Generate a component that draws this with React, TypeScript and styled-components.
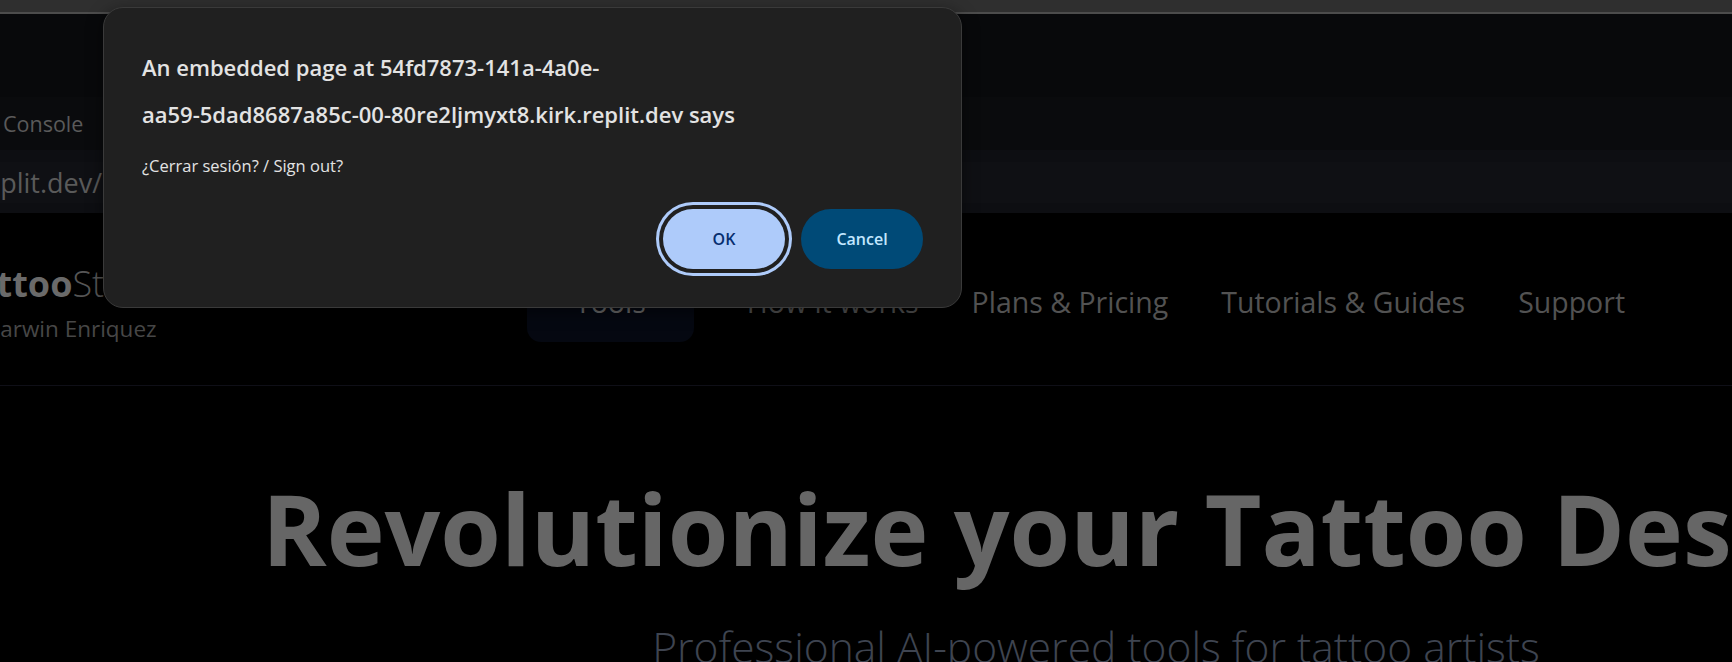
import React from "react";
import styled, { createGlobalStyle } from "styled-components";

const GlobalStyle = createGlobalStyle`
  html, body {
    margin: 0;
    padding: 0;
    background: #000;
    overflow: hidden;
  }
  * { box-sizing: border-box; }
`;

const Screen = styled.div`
  position: relative;
  width: 1732px;
  height: 662px;
  overflow: hidden;
  background: #000;
  font-family: "Open Sans", "Noto Sans", sans-serif;
`;

const TopStrip = styled.div`
  height: 14px;
  background: #2f2f2f;
  border-bottom: 2px solid #4c4c4c;
`;

const PaneTop = styled.div`
  height: 83px;
  background: #08090b;
`;

const TabBar = styled.div`
  height: 53px;
  display: flex;
  align-items: center;
  padding-left: 3px;
  background: #0a0b0d;
`;

const Tab = styled.span`
  font-size: 21.5px;
  color: #5a5a5a;
`;

const UrlBar = styled.div`
  background: #0d0e12;
  padding: 12px 0 10px;
`;

const UrlField = styled.div`
  height: 41px;
  display: flex;
  align-items: center;
  background: #0f1014;
  overflow: hidden;
`;

const UrlText = styled.span`
  font-size: 27px;
  color: #5a5a5a;
  margin-left: -26px;
  white-space: nowrap;
`;

const Page = styled.div`
  width: 2192px;
  background: #000;
`;

const Header = styled.header`
  height: 173px;
  padding-top: 6px;
  display: flex;
  align-items: center;
  border-bottom: 1px solid #0f0f17;
`;

const Brand = styled.div`
  margin-left: -46px;
  width: 573px;
  flex-shrink: 0;
  display: flex;
  flex-direction: column;
`;

const Logo = styled.div`
  font-size: 36px;
  line-height: 1.2;
  color: #6a6a6a;
  white-space: nowrap;
`;

const LogoStrong = styled.span`
  font-weight: 700;
`;

const LogoLight = styled.span`
  font-weight: 300;
  color: #565656;
`;

const Byline = styled.div`
  margin: 9px 0 0 -1px;
  font-size: 22.5px;
  line-height: 1.2;
  color: #474747;
  white-space: nowrap;
`;

const Nav = styled.nav`
  display: flex;
  align-items: center;
  gap: 53px;
`;

const NavItem = styled.a<{ $active?: boolean }>`
  display: flex;
  align-items: center;
  height: 80px;
  padding: ${(p) => (p.$active ? "0 48px" : "0")};
  border-radius: 14px;
  background: ${(p) => (p.$active ? "#050811" : "transparent")};
  font-size: 28.5px;
  color: ${(p) => (p.$active ? "#6a6a6a" : "#525252")};
  text-decoration: none;
  white-space: nowrap;
`;

const Hero = styled.section`
  display: flex;
  flex-direction: column;
  align-items: center;
  padding-top: 84px;
`;

const Headline = styled.h1`
  margin: 0;
  font-size: 98px;
  font-weight: 700;
  line-height: 1.2;
  color: #666666;
  white-space: nowrap;
`;

const Subtitle = styled.p`
  margin: 33px 0 0;
  font-size: 42.5px;
  font-weight: 300;
  line-height: 1.2;
  color: #3e4450;
  white-space: nowrap;
`;

const Dialog = styled.div`
  position: absolute;
  left: 103px;
  top: 7px;
  width: 859px;
  height: 301px;
  padding: 36px 38px 38px;
  display: flex;
  flex-direction: column;
  background: #202020;
  border: 1px solid #3a3a3a;
  border-radius: 20px;
  box-shadow: 0 4px 16px rgba(0, 0, 0, 0.5);
`;

const Title = styled.h2`
  margin: 0;
  font-size: 22px;
  font-weight: 600;
  line-height: 47px;
  color: #e3e3e3;
`;

const Message = styled.p`
  margin: 18px 0 0;
  font-size: 16.5px;
  line-height: 20px;
  color: #e3e3e3;
`;

const Actions = styled.div`
  margin-top: auto;
  display: flex;
  justify-content: flex-end;
  gap: 16px;
`;

const Button = styled.button<{ $primary?: boolean }>`
  width: 122px;
  height: 60px;
  border: none;
  border-radius: 30px;
  font-family: inherit;
  font-size: 16px;
  font-weight: 600;
  background: ${(p) => (p.$primary ? "#aecbfa" : "#004a77")};
  color: ${(p) => (p.$primary ? "#062e6f" : "#c2e7ff")};
  box-shadow: ${(p) =>
    p.$primary ? "0 0 0 4px #202020, 0 0 0 7px #aecbfa" : "none"};
`;

export default function App() {
  return (
    <>
      <GlobalStyle />
      <Screen>
        <TopStrip />
        <PaneTop />
        <TabBar>
          <Tab>Console</Tab>
        </TabBar>
        <UrlBar>
          <UrlField>
            <UrlText>replit.dev/</UrlText>
          </UrlField>
        </UrlBar>
        <Page>
          <Header>
            <Brand>
              <Logo>
                <LogoStrong>Tattoo</LogoStrong>
                <LogoLight>Studio</LogoLight>
              </Logo>
              <Byline>by Darwin Enriquez</Byline>
            </Brand>
            <Nav>
              <NavItem $active>Tools</NavItem>
              <NavItem>How it works</NavItem>
              <NavItem>Plans &amp; Pricing</NavItem>
              <NavItem>Tutorials &amp; Guides</NavItem>
              <NavItem>Support</NavItem>
            </Nav>
          </Header>
          <Hero>
            <Headline>Revolutionize your Tattoo Designs</Headline>
            <Subtitle>Professional AI-powered tools for tattoo artists</Subtitle>
          </Hero>
        </Page>
        <Dialog role="alertdialog">
          <Title>
            An embedded page at 54fd7873-141a-4a0e-
            <br />
            aa59-5dad8687a85c-00-80re2ljmyxt8.kirk.replit.dev says
          </Title>
          <Message>¿Cerrar sesión? / Sign out?</Message>
          <Actions>
            <Button $primary>OK</Button>
            <Button>Cancel</Button>
          </Actions>
        </Dialog>
      </Screen>
    </>
  );
}
